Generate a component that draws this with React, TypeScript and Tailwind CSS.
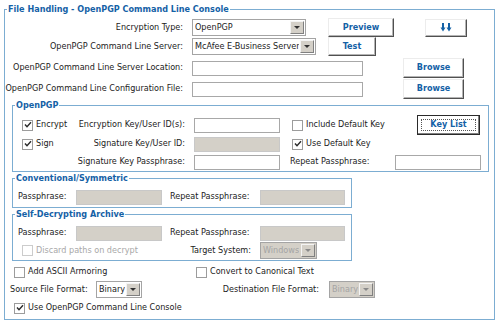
import React from 'react';

const font = "font-['DejaVu_Sans_Condensed','DejaVu_Sans',sans-serif]";

const Check = ({ checked = false, disabled = false }: { checked?: boolean; disabled?: boolean }) => (
    <span
        className={`w-[11px] h-[11px] border shrink-0 flex items-center justify-center bg-white ${
            disabled ? 'border-[#cccccc]' : 'border-[#9c9c9c]'
        }`}
    >
        {checked && (
            <svg width="8" height="8" viewBox="0 0 8 8">
                <path d="M1 3.5 L3 5.8 L7 1.2" stroke="#2a2a2a" strokeWidth="1.4" fill="none" />
            </svg>
        )}
    </span>
);

const CheckLabel = ({
    label,
    checked = false,
    disabled = false,
    className = ''
}: {
    label: string;
    checked?: boolean;
    disabled?: boolean;
    className?: string;
}) => (
    <div className={`flex items-center gap-[3px] ${className}`}>
        <Check checked={checked} disabled={disabled} />
        <span className={disabled ? 'text-[#a8a8a8]' : 'text-[#222]'}>{label}</span>
    </div>
);

const Btn = ({ children, className = '' }: { children: React.ReactNode; className?: string }) => (
    <button
        className={`bg-white border border-t-[#ececec] border-l-[#ececec] border-r-[#505050] border-b-[#505050] shadow-[inset_-1px_-1px_0_#b4b4b4] text-[#1461a6] font-bold text-[9px] flex items-center justify-center ${className}`}
    >
        {children}
    </button>
);

const DropBtn = ({ disabled = false }: { disabled?: boolean }) => (
    <span className="w-[14px] h-[13px] bg-[#d4d0c8] border border-t-[#f4f4f4] border-l-[#f4f4f4] border-r-[#808080] border-b-[#808080] flex items-center justify-center shrink-0 mr-[1px]">
        <svg width="6" height="4" viewBox="0 0 6 4">
            <path d="M0 0 H6 L3 3 Z" fill={disabled ? '#8a8a8a' : '#303030'} />
        </svg>
    </span>
);

const Select = ({ value, className = '', disabled = false }: { value: string; className?: string; disabled?: boolean }) => (
    <div
        className={`h-[17px] border border-[#a4a4a4] flex items-center justify-between pl-[2px] gap-[1px] ${
            disabled ? 'bg-[#d4d0c8] text-[#a4a4a4]' : 'bg-white text-[#222]'
        } ${className}`}
    >
        <span className="whitespace-nowrap overflow-hidden">{value}</span>
        <DropBtn disabled={disabled} />
    </div>
);

const Input = ({ className = '', disabled = false }: { className?: string; disabled?: boolean }) => (
    <div
        className={`h-[15px] border ${
            disabled ? 'bg-[#d4d0c8] border-[#c8c8c8]' : 'bg-white border-[#a8a8a8]'
        } ${className}`}
    />
);

const Legend = ({ children }: { children: React.ReactNode }) => (
    <legend className="ml-[2px] px-[1px] text-[#1461a6] font-bold text-[9px] leading-[12px]">{children}</legend>
);

export default function App() {
    return (
        <div className={`w-[500px] h-[327px] bg-white pt-[3px] px-[4px] text-[9px] text-[#222] ${font}`}>
            <fieldset className="w-[491px] border border-[#7cadd2] pb-[2px]">
                <Legend>File Handling - OpenPGP Command Line Console</Legend>

                <div className="pt-[3px]">
                    <div className="h-[19px] flex items-center">
                        <span className="w-[178px] text-right">Encryption Type:</span>
                        <Select value="OpenPGP" className="ml-[9px] w-[114px]" />
                        <Btn className="ml-[22px] w-[66px] h-[19px]">Preview</Btn>
                        <Btn className="ml-[31px] w-[42px] h-[18px]">
                            <svg width="12" height="9" viewBox="0 0 12 9">
                                <path d="M3 0 V5" stroke="#1461a6" strokeWidth="2" />
                                <path d="M0.5 4.5 H5.5 L3 8.5 Z" fill="#1461a6" />
                                <path d="M9 0 V5" stroke="#1461a6" strokeWidth="2" />
                                <path d="M6.5 4.5 H11.5 L9 8.5 Z" fill="#1461a6" />
                            </svg>
                        </Btn>
                    </div>

                    <div className="h-[19px] flex items-center">
                        <span className="w-[178px] text-right">OpenPGP Command Line Server:</span>
                        <Select value="McAfee E-Business Server" className="ml-[9px] w-[124px]" />
                        <Btn className="ml-[12px] w-[48px] h-[19px]">Test</Btn>
                    </div>

                    <div className="h-[20px] mt-[2px] flex items-center">
                        <span className="w-[178px] text-right">OpenPGP Command Line Server Location:</span>
                        <Input className="ml-[9px] w-[171px]" />
                        <Btn className="ml-[40px] w-[61px] h-[20px]">Browse</Btn>
                    </div>

                    <div className="h-[20px] mt-[1px] flex items-center">
                        <span className="w-[178px] text-right">OpenPGP Command Line Configuration File:</span>
                        <Input className="ml-[9px] w-[171px]" />
                        <Btn className="ml-[40px] w-[61px] h-[20px]">Browse</Btn>
                    </div>
                </div>

                <fieldset className="ml-[7px] w-[477px] border border-[#7cadd2]">
                    <Legend>OpenPGP</Legend>
                    <div className="pt-[4px]">
                        <div className="h-[20px] flex items-center">
                            <div className="w-[65px] pl-[9px]">
                                <CheckLabel label="Encrypt" checked />
                            </div>
                            <span className="w-[107px] text-right">Encryption Key/User ID(s):</span>
                            <Input className="ml-[9px] w-[86px]" />
                            <CheckLabel label="Include Default Key" className="ml-[12px]" />
                            <button className="ml-auto mr-[8px] w-[63px] h-[20px] p-[3px] bg-white border border-[#2a2a2a] shadow-[inset_-1px_-1px_0_#808080] flex">
                                <span className="flex-1 flex items-center justify-center border border-dotted border-[#555] text-[#1461a6] font-bold text-[9px]">
                                    Key List
                                </span>
                            </button>
                        </div>
                        <div className="h-[18px] flex items-center">
                            <div className="w-[65px] pl-[9px]">
                                <CheckLabel label="Sign" checked />
                            </div>
                            <span className="w-[107px] text-right">Signature Key/User ID:</span>
                            <Input className="ml-[9px] w-[86px]" disabled />
                            <CheckLabel label="Use Default Key" checked className="ml-[12px]" />
                        </div>
                        <div className="h-[18px] flex items-center">
                            <span className="w-[172px] text-right">Signature Key Passphrase:</span>
                            <Input className="ml-[9px] w-[86px]" />
                            <span className="ml-[10px] w-[105px]">Repeat Passphrase:</span>
                            <Input className="w-[86px]" />
                        </div>
                    </div>
                </fieldset>

                <fieldset className="ml-[7px] w-[340px] border border-[#7cadd2] pb-[1px]">
                    <Legend>Conventional/Symmetric</Legend>
                    <div className="pt-[4px] pl-[5px] h-[22px] flex items-center">
                        <span className="w-[58px]">Passphrase:</span>
                        <Input className="w-[86px]" disabled />
                        <span className="ml-[8px] w-[90px]">Repeat Passphrase:</span>
                        <Input className="w-[85px]" disabled />
                    </div>
                </fieldset>

                <fieldset className="ml-[7px] w-[340px] border border-[#7cadd2] pb-[1px]">
                    <Legend>Self-Decrypting Archive</Legend>
                    <div className="pt-[4px]">
                        <div className="pl-[5px] h-[18px] flex items-center">
                            <span className="w-[58px]">Passphrase:</span>
                            <Input className="w-[86px]" disabled />
                            <span className="ml-[8px] w-[90px]">Repeat Passphrase:</span>
                            <Input className="w-[85px]" disabled />
                        </div>
                        <div className="h-[17px] flex items-center">
                            <CheckLabel label="Discard paths on decrypt" disabled className="ml-[9px]" />
                            <span className="ml-auto">Target System:</span>
                            <Select value="Windows" disabled className="ml-[9px] mr-[34px] w-[57px]" />
                        </div>
                    </div>
                </fieldset>

                <div className="mt-[3px] h-[16px] flex items-center">
                    <CheckLabel label="Add ASCII Armoring" className="ml-[9px] w-[182px]" />
                    <CheckLabel label="Convert to Canonical Text" />
                </div>
                <div className="h-[19px] flex items-center">
                    <span className="ml-[5px] w-[86px]">Source File Format:</span>
                    <Select value="Binary" className="w-[46px]" />
                    <span className="w-[177px] text-right">Destination File Format:</span>
                    <Select value="Binary" disabled className="ml-[10px] w-[46px]" />
                </div>
                <div className="h-[18px] flex items-center">
                    <CheckLabel label="Use OpenPGP Command Line Console" checked className="ml-[9px]" />
                </div>
            </fieldset>
        </div>
    );
}
